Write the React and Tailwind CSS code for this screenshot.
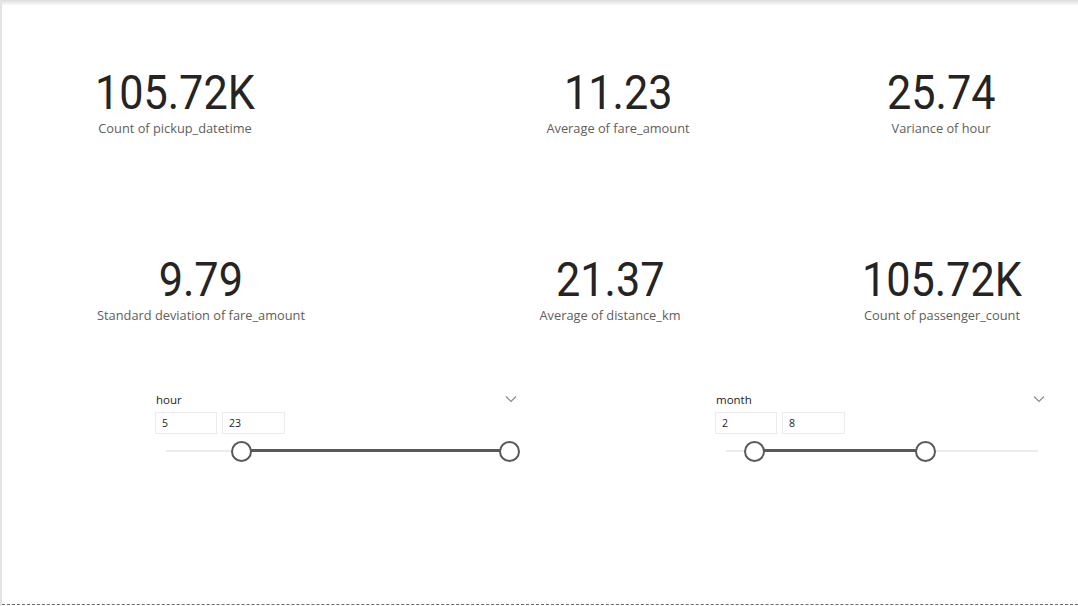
import React from 'react'

// KPI card: big number with its caption centered under it
function Card({ value, label, className }) {
  return (
    <div className={`flex flex-col items-center ${className}`}>
      <div className="whitespace-nowrap text-[48px] leading-[48px] scale-x-[0.9] text-[#252423] font-['Roboto',sans-serif]">
        {value}
      </div>
      <div className="mt-[3px] whitespace-nowrap text-[12.8px] leading-[16px] text-[#605e5c] font-['Open_Sans','Noto_Sans',sans-serif]">
        {label}
      </div>
    </div>
  )
}

function Chevron() {
  return (
    <svg width="12" height="8" viewBox="0 0 12 8" className="mt-[3px]">
      <polyline points="1,1.5 6,6.5 11,1.5" fill="none" stroke="#8a8886" strokeWidth="1.1" />
    </svg>
  )
}

// Range slicer: title, two value boxes, track with two thumbs
function Slicer({ title, lo, hi, min, max, trackWidth, className }) {
  const pct = (v) => ((v - min) / (max - min)) * trackWidth
  return (
    <div className={`flex flex-col ${className}`}>
      <div className="flex items-start justify-between pr-[3px] font-['Open_Sans','Noto_Sans',sans-serif]">
        <span className="text-[11.5px] leading-[16px] text-[#252423] pl-[1px]">{title}</span>
        <Chevron />
      </div>
      <div className="flex gap-[5px] mt-[4px]">
        <div className="w-[62px] h-[22px] border border-[#ebebeb] px-[6px] text-[10.5px] leading-[20px] text-[#252423] font-['Open_Sans','Noto_Sans',sans-serif]">
          {lo}
        </div>
        <div className="w-[63px] h-[22px] border border-[#ebebeb] px-[6px] text-[10.5px] leading-[20px] text-[#252423] font-['Open_Sans','Noto_Sans',sans-serif]">
          {hi}
        </div>
      </div>
      <div className="relative mt-[7px] ml-[11px] h-[20px]" style={{ width: trackWidth }}>
        <div className="absolute left-0 right-0 top-[9px] h-[2px] bg-[#ececec]" />
        <div
          className="absolute top-[8px] h-[3px] bg-[#595959]"
          style={{ left: pct(lo), width: pct(hi) - pct(lo) }}
        />
        <div
          className="absolute top-0 w-[21px] h-[21px] -ml-[10px] rounded-full bg-white border-2 border-[#595959]"
          style={{ left: pct(lo) }}
        />
        <div
          className="absolute top-0 w-[21px] h-[21px] -ml-[10px] rounded-full bg-white border-2 border-[#595959]"
          style={{ left: pct(hi) }}
        />
      </div>
    </div>
  )
}

export default function App() {
  return (
    <div className="relative w-[1078px] h-[606px] bg-white border-l-2 border-[#e3e3e3] flex flex-col overflow-hidden">
      {/* top shadow */}
      <div className="absolute top-0 left-0 right-0 h-[6px] bg-gradient-to-b from-[#dcdcdc] to-white pointer-events-none" />

      {/* Row 1 */}
      <div className="flex mt-[69px]">
        <Card value="105.72K" label="Count of pickup_datetime" className="ml-[28px] w-[290px]" />
        <Card value="11.23" label="Average of fare_amount" className="ml-[158px] w-[280px]" />
        <Card value="25.74" label="Variance of hour" className="ml-[78px] w-[210px]" />
      </div>

      {/* Row 2 */}
      <div className="flex mt-[120px]">
        <Card value="9.79" label="Standard deviation of fare_amount" className="ml-[54px] w-[290px]" />
        <Card value="21.37" label="Average of distance_km" className="ml-[124px] w-[280px]" />
        <Card value="105.72K" label="Count of passenger_count" className="ml-[87px] w-[210px]" />
      </div>

      {/* Slicers */}
      <div className="flex mt-[69px]">
        <Slicer title="hour" lo={5} hi={23} min={0} max={23} trackWidth={343} className="ml-[153px] w-[365px]" />
        <Slicer title="month" lo={2} hi={8} min={1} max={12} trackWidth={312} className="ml-[195px] w-[333px]" />
      </div>

      {/* bottom dashed edge */}
      <div className="mt-auto mb-[1px] border-b border-dashed border-[#6b6b6b]" />
    </div>
  )
}
